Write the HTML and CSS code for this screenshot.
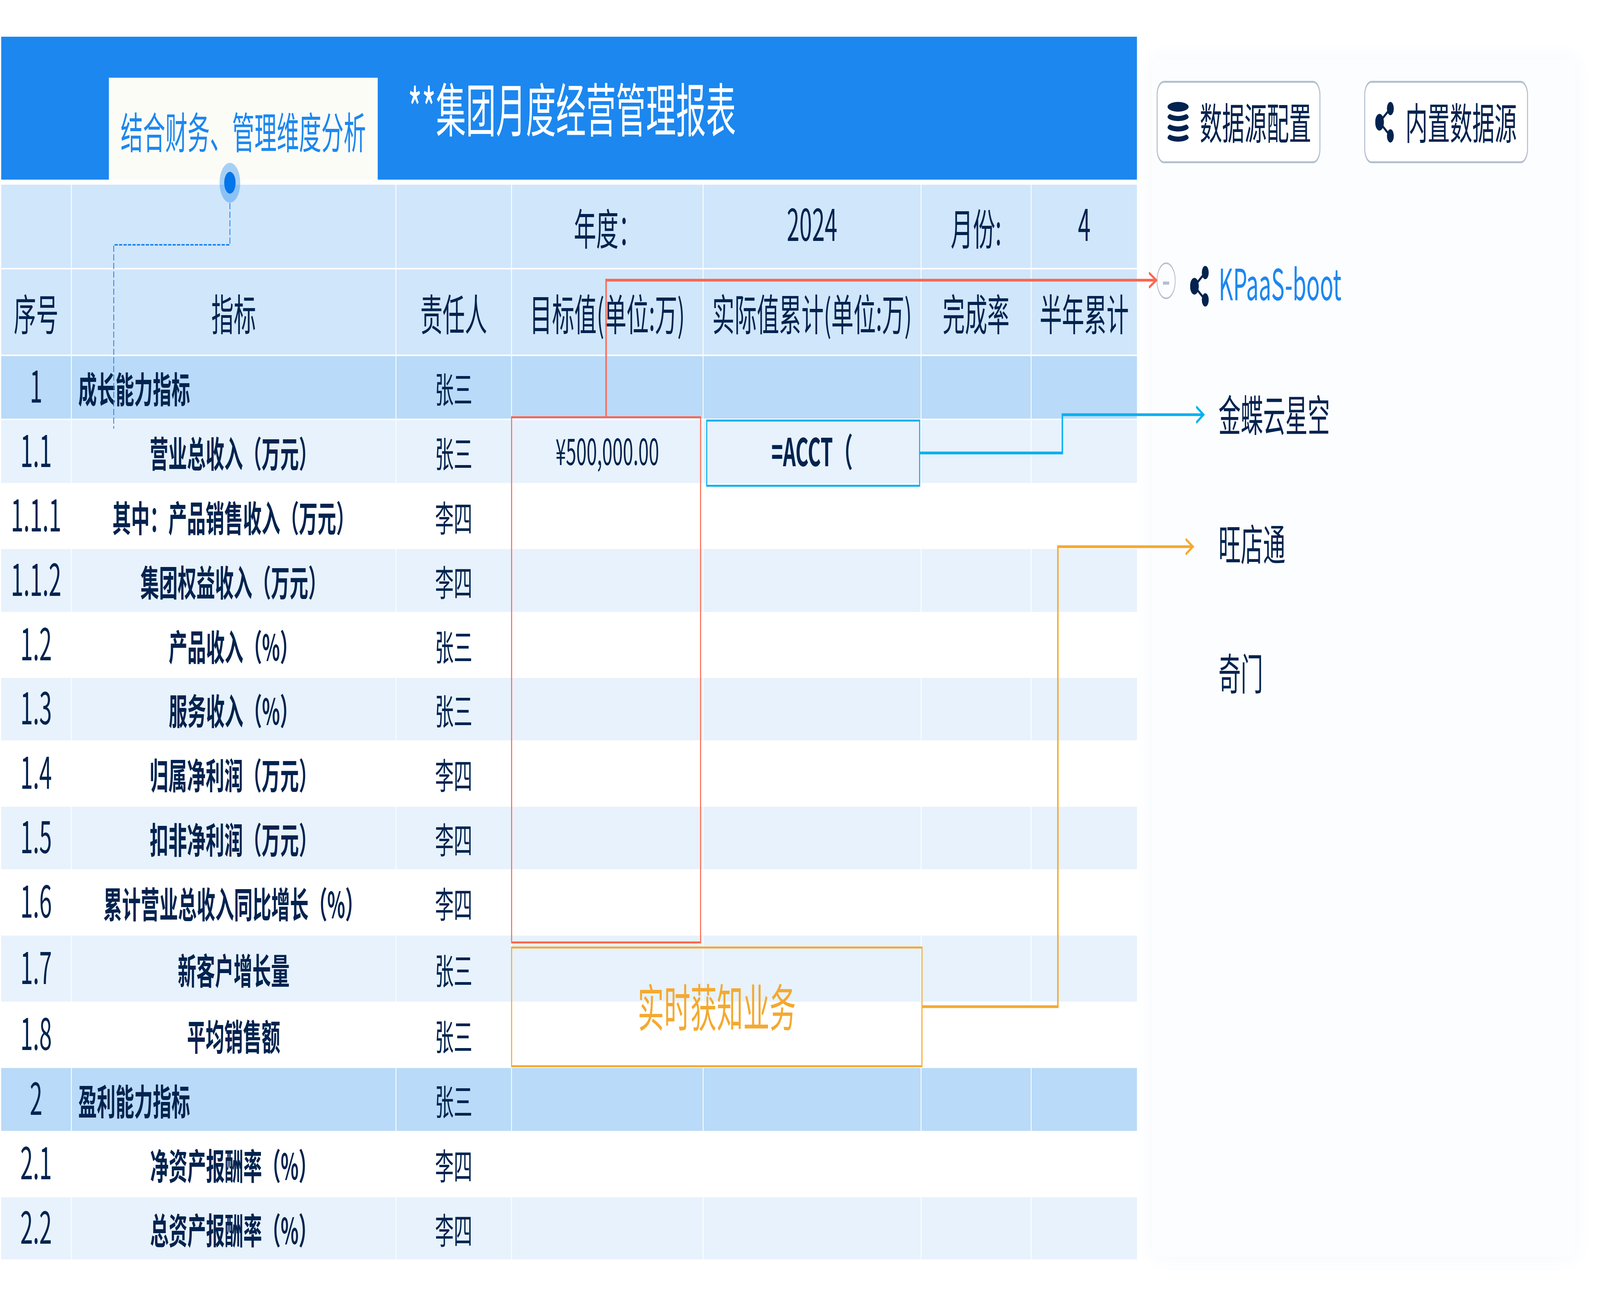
FILE: index.html
```html
<!DOCTYPE html>
<html lang="zh-CN">
<head>
<meta charset="utf-8">
<title>集团月度经营管理报表</title>
<link rel="stylesheet" href="styles.css">
</head>
<body>
<div class="stage" id="stage">
<main class="page">
  <section class="report">
    <header class="report-title">
      <h1>**集团月度经营管理报表</h1>
      <div class="tip">结合财务、管理维度分析</div>
    </header>
    <div class="sheet">
      <div class="row head"><div class="cell"></div><div class="cell"></div><div class="cell"></div><div class="cell">年度：</div><div class="cell digits">2024</div><div class="cell">月份:</div><div class="cell digits">4</div></div>
      <div class="row head"><div class="cell">序号</div><div class="cell">指标</div><div class="cell">责任人</div><div class="cell">目标值(单位:万)</div><div class="cell">实际值累计(单位:万)</div><div class="cell">完成率</div><div class="cell">半年累计</div></div>
      <div class="row section spaced"><div class="cell num">1</div><div class="cell name">成长能力指标</div><div class="cell who">张三</div><div class="cell"></div><div class="cell"></div><div class="cell"></div><div class="cell"></div></div>
      <div class="row band"><div class="cell num">1.1</div><div class="cell name">营业总收入（万元）</div><div class="cell who">张三</div><div class="cell amount">¥500,000.00</div><div class="cell name formula">=ACCT（</div><div class="cell"></div><div class="cell"></div></div>
      <div class="row"><div class="cell num">1.1.1</div><div class="cell name">其中：产品销售收入（万元）</div><div class="cell who">李四</div><div class="cell"></div><div class="cell"></div><div class="cell"></div><div class="cell"></div></div>
      <div class="row band"><div class="cell num">1.1.2</div><div class="cell name">集团权益收入（万元）</div><div class="cell who">李四</div><div class="cell"></div><div class="cell"></div><div class="cell"></div><div class="cell"></div></div>
      <div class="row"><div class="cell num">1.2</div><div class="cell name">产品收入（%）</div><div class="cell who">张三</div><div class="cell"></div><div class="cell"></div><div class="cell"></div><div class="cell"></div></div>
      <div class="row band"><div class="cell num">1.3</div><div class="cell name">服务收入（%）</div><div class="cell who">张三</div><div class="cell"></div><div class="cell"></div><div class="cell"></div><div class="cell"></div></div>
      <div class="row"><div class="cell num">1.4</div><div class="cell name">归属净利润（万元）</div><div class="cell who">李四</div><div class="cell"></div><div class="cell"></div><div class="cell"></div><div class="cell"></div></div>
      <div class="row band"><div class="cell num">1.5</div><div class="cell name">扣非净利润（万元）</div><div class="cell who">李四</div><div class="cell"></div><div class="cell"></div><div class="cell"></div><div class="cell"></div></div>
      <div class="row"><div class="cell num">1.6</div><div class="cell name">累计营业总收入同比增长（%）</div><div class="cell who">李四</div><div class="cell"></div><div class="cell"></div><div class="cell"></div><div class="cell"></div></div>
      <div class="row band"><div class="cell num">1.7</div><div class="cell name">新客户增长量</div><div class="cell who">张三</div><div class="cell"></div><div class="cell"></div><div class="cell"></div><div class="cell"></div></div>
      <div class="row"><div class="cell num">1.8</div><div class="cell name">平均销售额</div><div class="cell who">张三</div><div class="cell"></div><div class="cell"></div><div class="cell"></div><div class="cell"></div></div>
      <div class="row section"><div class="cell num">2</div><div class="cell name">盈利能力指标</div><div class="cell who">张三</div><div class="cell"></div><div class="cell"></div><div class="cell"></div><div class="cell"></div></div>
      <div class="row"><div class="cell num">2.1</div><div class="cell name">净资产报酬率（%）</div><div class="cell who">李四</div><div class="cell"></div><div class="cell"></div><div class="cell"></div><div class="cell"></div></div>
      <div class="row band"><div class="cell num">2.2</div><div class="cell name">总资产报酬率（%）</div><div class="cell who">李四</div><div class="cell"></div><div class="cell"></div><div class="cell"></div><div class="cell"></div></div>
    </div>
  </section>

  <aside class="panel">
    <div class="toolbar">
      <button class="tool" type="button">
        <svg class="db-icon" viewBox="0 0 104 104" aria-hidden="true">
          <ellipse cx="52" cy="12.5" rx="52" ry="12.5"/>
          <path id="disc" d="M11 31Q52 41 93 31C99 33 104 36 104 39C104 44 78 49 52 49C26 49 0 44 0 39C0 36 5 33 11 31Z"/>
          <use href="#disc" y="26.7"/>
          <use href="#disc" y="52.7"/>
        </svg>
        <span>数据源配置</span>
      </button>
      <button class="tool" type="button">
        <svg class="share-icon" viewBox="0 0 94 104" aria-hidden="true">
          <path class="share-link" d="M21 52L75 17M21 52L75 87"/>
          <circle cx="21.5" cy="52" r="21.5"/>
          <circle cx="75" cy="17" r="17"/>
          <circle cx="75" cy="87" r="17"/>
        </svg>
        <span>内置数据源</span>
      </button>
    </div>
    <ul class="tree">
      <li class="tree-row">
        <svg class="toggle" viewBox="0 0 94 94" aria-hidden="true">
          <circle cx="47" cy="47" r="45"/>
          <path d="M31 53H62"/>
        </svg>
        <svg class="share-icon" viewBox="0 0 94 104" aria-hidden="true">
          <path class="share-link" d="M21 52L75 17M21 52L75 87"/>
          <circle cx="21.5" cy="52" r="21.5"/>
          <circle cx="75" cy="17" r="17"/>
          <circle cx="75" cy="87" r="17"/>
        </svg>
        <span class="tree-label active">KPaaS-boot</span>
      </li>
      <li class="tree-row"><span class="tree-label">金蝶云星空</span></li>
      <li class="tree-row"><span class="tree-label">旺店通</span></li>
      <li class="tree-row"><span class="tree-label">奇门</span></li>
    </ul>
  </aside>
</main>

<div class="callout">实时获知业务</div>

<svg class="links" viewBox="0 0 7892 3342" aria-hidden="true">
  <path class="dash" d="M1134 520V627H561V1098"/>
  <circle class="dot-halo" cx="1134" cy="468" r="51"/>
  <circle class="dot" cx="1134" cy="468" r="28"/>
  <rect class="red thin" x="2523.5" y="1068.5" width="932" height="1345"/>
  <path class="red" d="M2989.5 1068V717.5H5703"/>
  <path class="red head-tip" d="M5670 700L5703 717.500L5670 735"/>
  <rect class="teal thin" x="3486" y="1077" width="1050" height="167"/>
  <path class="teal" d="M4537 1160H5240V1062H5936"/>
  <path class="teal head-tip" d="M5903 1043L5936 1062L5903 1081"/>
  <path class="amber" d="M4550 2578H5218V1400H5884"/>
  <path class="amber head-tip" d="M5851 1382L5884 1400L5851 1418"/>
</svg>
</div>
<script src="fit.js"></script>
</body>
</html>
```

FILE: styles.css
```css
* { box-sizing: border-box; }

html, body {
  margin: 0;
  padding: 0;
  background: #fff;
  overflow: hidden;
}

body {
  font-family: "Noto Sans CJK SC", "Noto Sans", sans-serif;
  color: #02234f;
}

/* fixed 7892×3342 artboard; fit.js scales it to the window */
.stage {
  position: relative;
  width: 7892px;
  height: 3342px;
  overflow: hidden;
  transform-origin: 0 0;
}

.page {
  display: flex;
  align-items: flex-start;
}

/* report */
.report {
  position: relative;
  z-index: 1;
  flex: none;
  width: 5602px;
  margin: 94px 0 0 6px;
}

.report-title {
  position: relative;
  display: flex;
  align-items: center;
  height: 366px;
  margin-bottom: 13px;
  padding-left: 2006px;
  background: #1c87ef;
}

.report-title h1 {
  margin: 0 0 8px;
  font-size: 148px;
  font-weight: 400;
  line-height: 1;
  color: #fff;
  white-space: nowrap;
}

.tip {
  position: absolute;
  left: 531px;
  top: 105px;
  display: flex;
  align-items: center;
  justify-content: center;
  width: 1326px;
  height: 261px;
  padding-top: 6px;
  background: #fcfcf7;
  color: #1c87ef;
  font-size: 110px;
  line-height: 1;
}

.sheet {
  display: grid;
  grid-template-columns: 344px 1597px 566px 941px 1071px 539px 520px;
  grid-template-rows: 217px 222px 164px 161px 169px 161px 169px 160px 170px 160px 170px 169px 170px 161px 170px 159px;
  column-gap: 4px;
}

.row { display: contents; }

.cell {
  display: flex;
  align-items: center;
  justify-content: center;
  min-width: 0;
  font-size: 92px;
  line-height: 1;
  white-space: nowrap;
}

.head .cell {
  margin-bottom: 4px;
  background: #d0e6fb;
  font-size: 110px;
}

.head .digits {
  padding-bottom: 24px;
  font-size: 112px;
}

.section .cell { background: #b9daf8; }
.section.spaced .cell { margin-bottom: 4px; }
.band .cell { background: #e7f2fc; }

.num {
  padding-bottom: 20px;
  font-size: 112px;
}

.name { font-weight: 700; }
.who { font-size: 92px; }

.amount {
  padding-bottom: 12px;
  font-size: 92px;
}

.formula {
  padding-bottom: 12px;
  font-size: 98px;
}

.section .name {
  justify-content: flex-start;
  padding-left: 32px;
}

/* data source panel */
.panel {
  flex: none;
  width: 2089px;
  height: 3067px;
  margin: 152px 0 0 74px;
  padding: 55px 0 0 23px;
  background: #fcfdff;
  border-radius: 30px;
  box-shadow: 0 0 70px 10px #f7f9fd;
}

.toolbar {
  display: flex;
  gap: 216px;
}

.tool {
  display: flex;
  align-items: center;
  gap: 55px;
  width: 808px;
  height: 211px;
  padding: 0 0 0 49px;
  border: 5px solid #b4c0d0;
  border-radius: 36px;
  background: #fff;
  color: #02234f;
  font: inherit;
  font-size: 110px;
  line-height: 1;
  white-space: nowrap;
}

.tool span { margin-bottom: 8px; }
.tool svg { flex: none; fill: #02234f; }

.db-icon { width: 104px; height: 104px; }
.share-icon { width: 94px; height: 104px; fill: #02234f; flex: none; }
.share-link { fill: none; stroke: #02234f; stroke-width: 7; }

.tree {
  margin: 142px 0 0;
  padding: 0;
  list-style: none;
}

.tree-row {
  display: flex;
  align-items: center;
  height: 331px;
  padding-left: 305px;
}

.tree-row:first-child { padding-left: 0; }
.tree-row .share-icon { margin-top: 14px; }

.toggle {
  flex: none;
  width: 94px;
  height: 94px;
  margin: -14px 71px 0 0;
  fill: none;
  stroke: #b4c0d0;
  stroke-width: 4;
}

.toggle path { stroke-width: 8; }

.tree-row:first-child .tree-label { margin-left: 47px; }

.tree-label {
  font-size: 110px;
  line-height: 1;
  white-space: nowrap;
}

.tree-label.active {
  margin-bottom: 10px;
  color: #1c87ef;
}

/* overlays */
.callout {
  position: absolute;
  z-index: 2;
  left: 2521px;
  top: 2424px;
  display: flex;
  align-items: center;
  justify-content: center;
  width: 2029px;
  height: 309px;
  padding-bottom: 14px;
  border: 5px solid #f4a930;
  color: #f4a930;
  font-size: 130px;
  line-height: 1;
}

.links {
  position: absolute;
  z-index: 3;
  left: 0;
  top: 0;
  width: 7892px;
  height: 3342px;
  fill: none;
  pointer-events: none;
}

.dash {
  stroke: #1c87ef;
  stroke-width: 4;
  stroke-dasharray: 16 6;
}

.dot-halo { fill: #1c87ef; fill-opacity: .38; }
.dot { fill: #0175ea; }

.red { stroke: #ff6650; stroke-width: 7; }
.teal { stroke: #00b0f0; stroke-width: 7; }
.amber { stroke: #f4a930; stroke-width: 7; }
.thin { stroke-width: 5; }
.head-tip { stroke-linecap: round; stroke-linejoin: miter; }
```

FILE: fit.js
```js
// The artboard is 7892×3342. Scale it to the actual window so nothing is cut off
// when the browser caps the window size; at 7892×3342 this is the identity.
(function () {
  var stage = document.getElementById('stage');
  function fit() {
    stage.style.transform = 'scale(' + innerWidth / 7892 + ',' + innerHeight / 3342 + ')';
  }
  addEventListener('resize', fit);
  fit();
})();
```
